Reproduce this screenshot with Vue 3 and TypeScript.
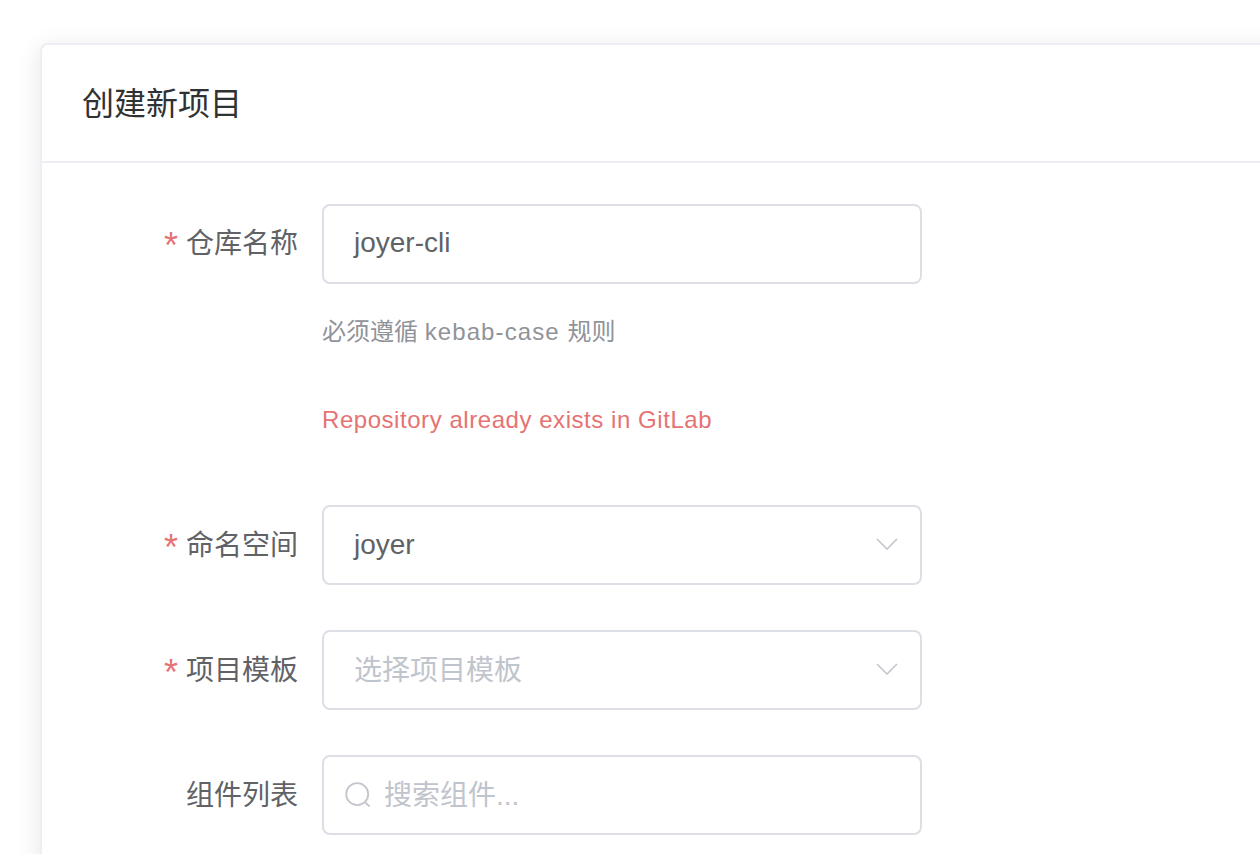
<script setup lang="ts">
interface Field {
  label: string
  required: boolean
  value?: string
  placeholder?: string
  kind: 'input' | 'select' | 'search'
  error?: string
  hint?: boolean
}
const fields: Field[] = [
  { label: '仓库名称', required: true, value: 'joyer-cli', kind: 'input', hint: true, error: 'Repository already exists in GitLab' },
  { label: '命名空间', required: true, value: 'joyer', kind: 'select' },
  { label: '项目模板', required: true, placeholder: '选择项目模板', kind: 'select' },
  { label: '组件列表', required: false, placeholder: '搜索组件...', kind: 'search' },
]
</script>

<template>
  <div class="page">
    <section class="card">
      <header class="card-head">创建新项目</header>
      <form class="form">
        <div v-for="f in fields" :key="f.label" class="item">
          <label class="label"><span v-if="f.required" class="star">*</span>{{ f.label }}</label>
          <div class="content">
            <div class="control" :class="{ search: f.kind === 'search' }">
              <svg v-if="f.kind === 'search'" class="search-icon" viewBox="0 0 28 28" fill="none">
                <circle cx="13.2" cy="13.2" r="11" stroke="#c3c6cd" stroke-width="1.8" />
                <path d="M21.6 21.6 L25 25" stroke="#c3c6cd" stroke-width="1.8" stroke-linecap="round" />
              </svg>
              <span v-if="f.value" class="value">{{ f.value }}</span>
              <span v-else class="placeholder">{{ f.placeholder }}</span>
              <svg v-if="f.kind === 'select'" class="caret" viewBox="0 0 22 12" fill="none">
                <path d="M1 1 L11 11 L21 1" stroke="#c3c6cd" stroke-width="1.6" />
              </svg>
            </div>
            <p v-if="f.hint" class="hint">必须遵循 <span class="latin">kebab-case</span> 规则</p>
            <p v-if="f.error" class="error">{{ f.error }}</p>
          </div>
        </div>
      </form>
    </section>
  </div>
</template>

<style>
html, body { margin: 0; background: #fff; overflow: hidden; }
</style>

<style scoped>
.page {
  width: 1260px;
  height: 854px;
  overflow: hidden;
  box-sizing: border-box;
  padding: 43px 0 0 40px;
  font-family: "Liberation Sans", "Noto Sans CJK SC", sans-serif;
  background: #fff;
}
.card {
  width: 1400px;
  height: 1000px;
  box-sizing: border-box;
  border: 2px solid #ebeef5;
  border-radius: 8px;
  background: #fff;
  box-shadow: 0 4px 24px rgba(0, 0, 0, 0.1);
}
.card-head {
  height: 118px;
  box-sizing: border-box;
  padding-left: 40px;
  font-size: 32px;
  line-height: 118px;
  color: #303133;
  border-bottom: 2px solid #ebeef5;
}
.form { padding-top: 41px; }
.item { display: flex; margin-bottom: 45px; }
.item:first-child { margin-bottom: 69px; }
.label {
  width: 256px;
  flex: none;
  text-align: right;
  font-size: 28px;
  line-height: 82px;
  height: 80px;
  color: #606266;
}
.item:first-child .label { line-height: 80px; }
.item:first-child .value { padding-bottom: 2px; }
.star {
  color: #e57373;
  margin-right: 8px;
  font-size: 36px;
  line-height: 0;
  vertical-align: -5px;
}
.content { margin-left: 24px; width: 600px; }
.control {
  height: 80px;
  box-sizing: border-box;
  border: 2px solid #dcdfe6;
  border-radius: 8px;
  padding: 0 30px;
  display: flex;
  align-items: center;
  font-size: 28px;
  position: relative;
}
.control.search { padding-left: 20px; }
.value { color: #606266; }
.placeholder { color: #c0c4cc; padding-bottom: 4px; }
.search-icon { width: 28px; height: 28px; margin-right: 12px; flex: none; }
.caret { position: absolute; right: 22px; top: 31px; width: 22px; height: 12px; }
.hint {
  margin: 32px 0 0;
  font-size: 24px;
  line-height: 32px;
  color: #909399;
}
.latin { letter-spacing: 1.1px; margin-right: 1px; }
.error {
  margin: 56px 0 0;
  font-size: 24px;
  line-height: 32px;
  letter-spacing: 0.55px;
  color: #e57373;
}
</style>
